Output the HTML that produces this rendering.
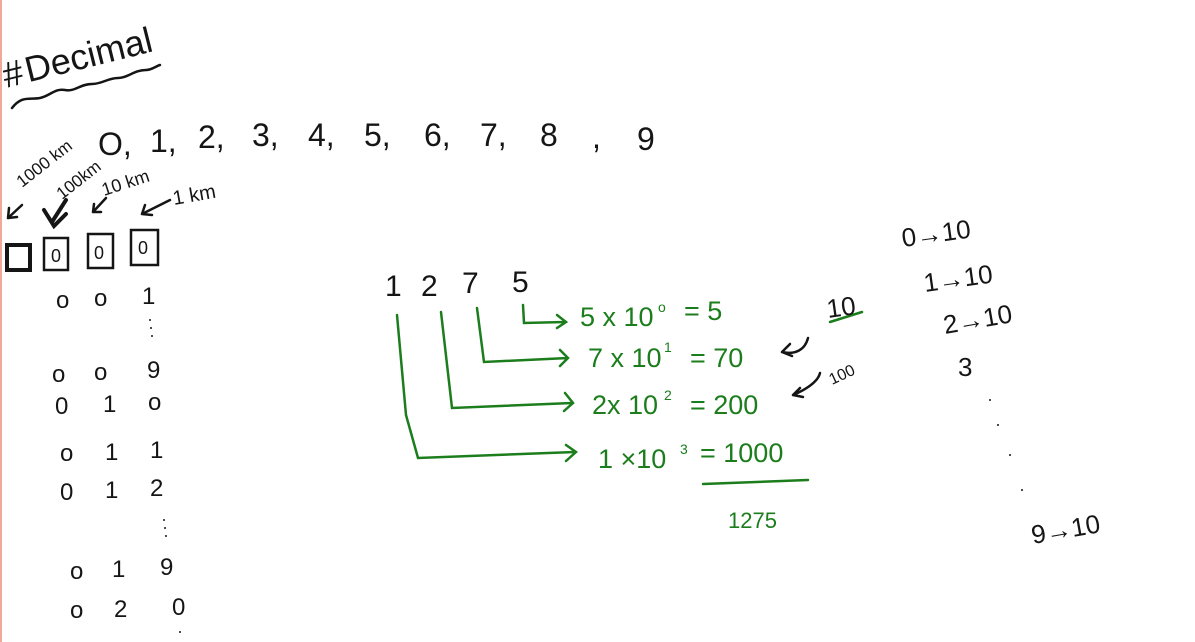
<!DOCTYPE html>
<html><head><style>
html,body{margin:0;padding:0;background:#fff;}
body{width:1195px;height:642px;overflow:hidden;position:relative;}
svg{position:absolute;left:0;top:0;}
text{font-family:"Liberation Sans",sans-serif;}
.k{fill:#151515;}
.g{fill:#1c7d1c;}
</style></head><body>
<svg width="1195" height="642" viewBox="0 0 1195 642">
<rect x="0" y="0" width="2" height="642" fill="#f0a898"/>
<g fill="none" stroke="#151515" stroke-width="2.5" stroke-linecap="round">
<path d="M12 108 C22 95 30 100 40 98 C50 96 55 88 65 90 C75 92 80 84 92 84 C102 84 108 78 118 78 C128 78 134 70 146 70 C152 70 156 66 160 65"/>
<path d="M22 205 L8 218 M8 218 L9 208 M8 218 L17 217"/>
<path d="M66 200 L52 222 M44 210 L54 226 L66 214" stroke-width="4"/>
<path d="M106 198 L93 212 M93 212 L94 204 M93 212 L101 212"/>
<path d="M170 200 L142 214 M142 214 L145 205 M142 214 L152 215"/>
<rect x="7" y="245" width="23" height="25" stroke-width="4"/>
<rect x="44" y="238" width="24" height="32"/>
<rect x="88" y="234" width="25" height="34"/>
<rect x="131" y="230" width="27" height="35"/>
</g>
<text class="k" font-size="36" transform="translate(6,88) rotate(-14)">#&#8202;Decimal</text>
<g class="k" font-size="32">
<text x="98" y="155">O,</text><text x="150" y="152">1,</text><text x="198" y="148">2,</text><text x="252" y="146">3,</text><text x="308" y="146">4,</text><text x="364" y="146">5,</text><text x="424" y="146">6,</text><text x="480" y="146">7,</text><text x="540" y="146">8</text><text x="592" y="148">,</text><text x="637" y="150">9</text>
</g>
<text class="k" font-size="17" transform="translate(22,188) rotate(-38)">1000 km</text>
<text class="k" font-size="17" transform="translate(62,200) rotate(-38)">100km</text>
<text class="k" font-size="18" transform="translate(104,196) rotate(-18)">10 km</text>
<text class="k" font-size="20" transform="translate(174,205) rotate(-10)">1 km</text>
<g class="k" font-size="18">
<text x="51" y="262">0</text><text x="94" y="259">0</text><text x="138" y="254">0</text>
</g>
<g class="k" font-size="24">
<text x="56" y="308">o</text><text x="94" y="306">o</text><text x="142" y="304">1</text>
<text x="52" y="382">o</text><text x="94" y="380">o</text><text x="147" y="378">9</text>
<text x="55" y="414">0</text><text x="103" y="412">1</text><text x="148" y="410">o</text>
<text x="60" y="461">o</text><text x="105" y="460">1</text><text x="150" y="458">1</text>
<text x="60" y="500">0</text><text x="105" y="498">1</text><text x="150" y="496">2</text>
<text x="70" y="579">o</text><text x="112" y="577">1</text><text x="160" y="575">9</text>
<text x="70" y="618">o</text><text x="114" y="617">2</text><text x="172" y="615">0</text>
</g>
<g fill="#151515"><circle cx="150" cy="320" r="1"/><circle cx="151" cy="328" r="1"/><circle cx="152" cy="336" r="1"/><circle cx="164" cy="520" r="1"/><circle cx="165" cy="528" r="1"/><circle cx="166" cy="536" r="1"/><circle cx="180" cy="632" r="1"/><circle cx="990" cy="400" r="1"/><circle cx="998" cy="425" r="1"/><circle cx="1010" cy="455" r="1"/><circle cx="1022" cy="490" r="1"/></g>
<g class="k" font-size="30"><text x="385" y="296">1</text><text x="421" y="296">2</text><text x="462" y="293">7</text><text x="512" y="292">5</text></g>
<g fill="none" stroke="#1c7d1c" stroke-width="2.5" stroke-linecap="round">
<path d="M523 305 L524 323 L565 322 M557 315 L566 322 L557 328"/>
<path d="M477 308 L484 362 L568 358 M560 350 L568 358 L560 366"/>
<path d="M441 312 L452 408 L572 403 M565 393 L573 403 L564 411"/>
<path d="M397 315 L406 415 L418 458 L575 452 M566 445 L576 452 L566 461"/>
<path d="M703 484 L808 480"/>
<path d="M830 322 L862 312"/>
</g>
<g fill="none" stroke="#151515" stroke-width="2.5" stroke-linecap="round">
<path d="M808 338 C805 350 795 355 782 352 M782 352 L790 344 M782 352 L792 356"/>
<path d="M820 373 C818 382 805 390 793 395 M793 395 L800 388 M793 395 L803 397"/>
</g>
<g class="g" font-size="27">
<text x="580" y="326">5 x 10</text><text x="658" y="312" font-size="14">o</text><text x="684" y="320">= 5</text>
<text x="588" y="367">7 x 10</text><text x="664" y="352" font-size="14">1</text><text x="690" y="367">= 70</text>
<text x="592" y="414">2x 10</text><text x="664" y="400" font-size="14">2</text><text x="690" y="414">= 200</text>
<text x="598" y="468">1 ×10</text><text x="680" y="454" font-size="14">3</text><text x="700" y="462">= 1000</text>
<text x="728" y="528" font-size="22">1275</text>
</g>
<g class="k" font-size="26">
<text x="828" y="318" transform="rotate(-8 828 318)">10</text>
<text x="832" y="385" font-size="16" transform="rotate(-25 832 385)">100</text>
<text x="903" y="247" transform="rotate(-8 903 247)">0→10</text>
<text x="925" y="292" transform="rotate(-8 925 292)">1→10</text>
<text x="945" y="334" transform="rotate(-10 945 334)">2→10</text>
<text x="958" y="376">3</text>
<text x="1033" y="544" transform="rotate(-10 1033 544)">9→10</text>
</g>
</svg>
</body></html>
